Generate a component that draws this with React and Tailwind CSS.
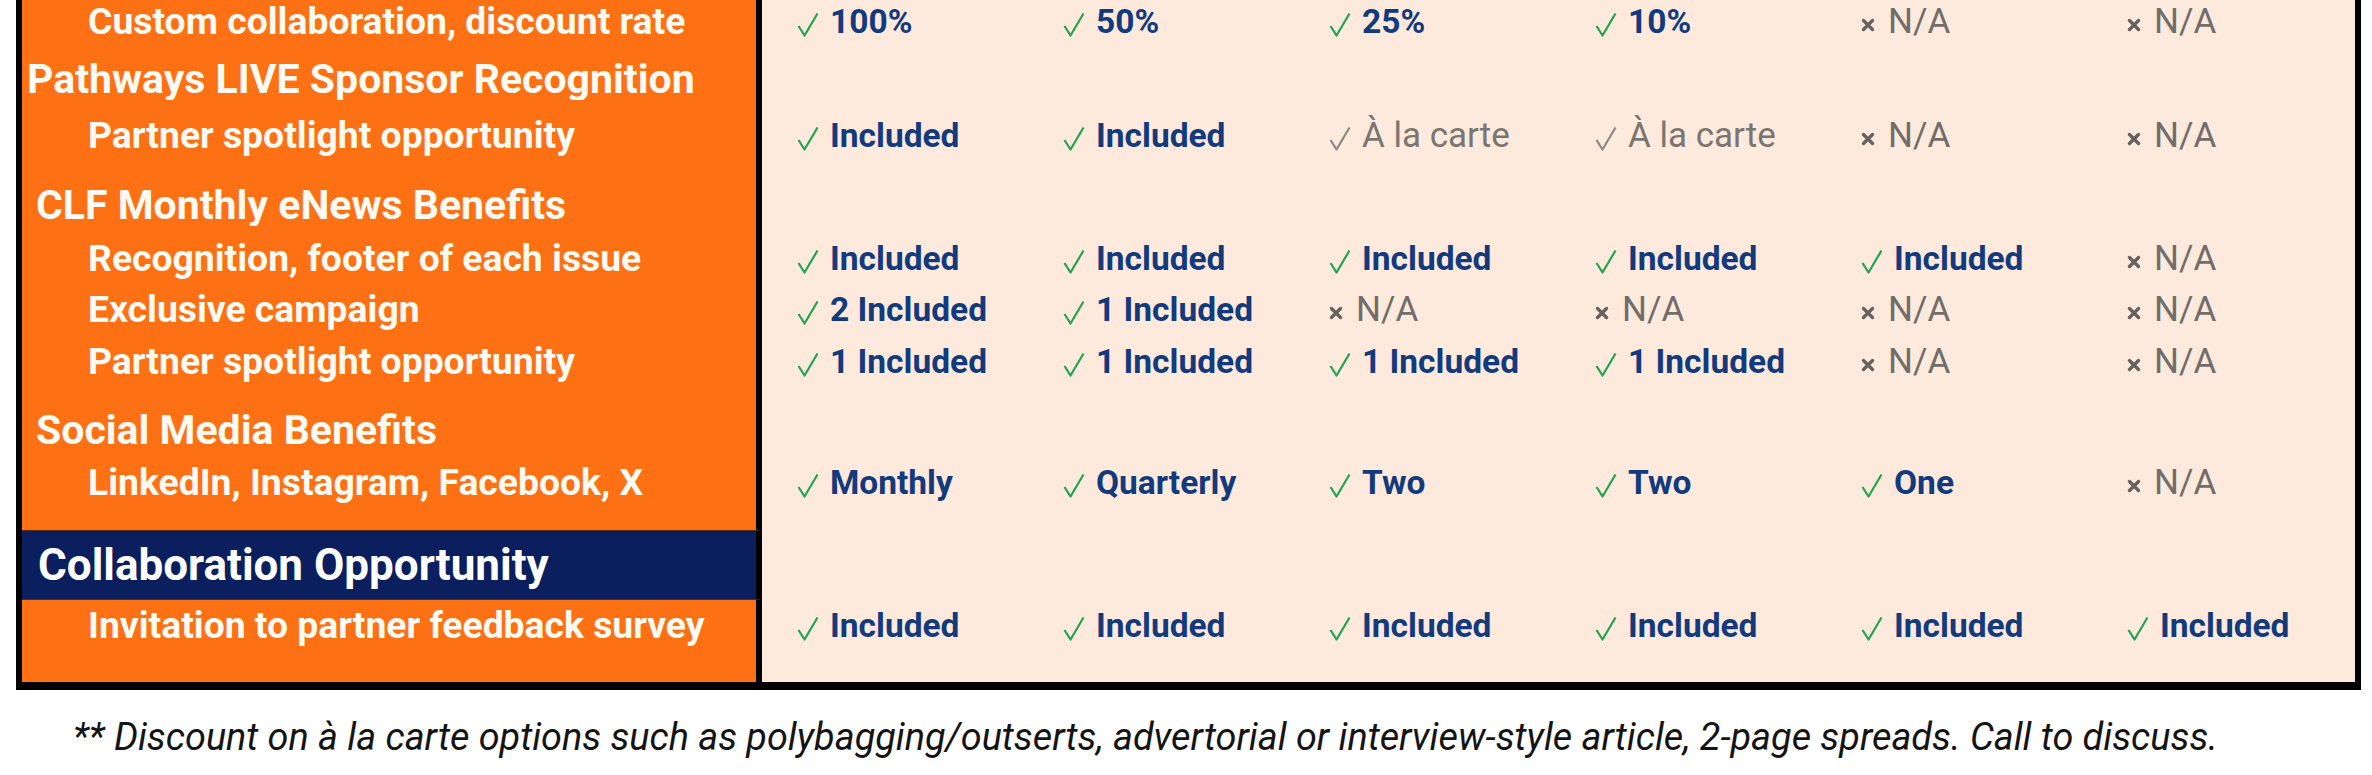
import React from 'react'

const rows = [
    { kind: 'sub', label: 'Custom collaboration, discount rate', pad: 'pt-0', line: 'h-[44px]',
      cells: [['ok', '100%'], ['ok', '50%'], ['ok', '25%'], ['ok', '10%'], ['na'], ['na']] },
    { kind: 'head', label: 'Pathways LIVE Sponsor Recognition', pad: 'pt-[16px]', indent: 'pl-[5px]' },
    { kind: 'sub', label: 'Partner spotlight opportunity', pad: 'pt-[16px]',
      cells: [['ok', 'Included'], ['ok', 'Included'], ['alc', 'À la carte'], ['alc', 'À la carte'], ['na'], ['na']] },
    { kind: 'head', label: 'CLF Monthly eNews Benefits', pad: 'pt-[30px]', indent: 'pl-[14px]' },
    { kind: 'sub', label: 'Recognition, footer of each issue', pad: 'pt-[13px]',
      cells: [['ok', 'Included'], ['ok', 'Included'], ['ok', 'Included'], ['ok', 'Included'], ['ok', 'Included'], ['na']] },
    { kind: 'sub', label: 'Exclusive campaign', pad: 'pt-[11px]',
      cells: [['ok', '2 Included'], ['ok', '1 Included'], ['na'], ['na'], ['na'], ['na']] },
    { kind: 'sub', label: 'Partner spotlight opportunity', pad: 'pt-[12px]',
      cells: [['ok', '1 Included'], ['ok', '1 Included'], ['ok', '1 Included'], ['ok', '1 Included'], ['na'], ['na']] },
    { kind: 'head', label: 'Social Media Benefits', pad: 'pt-[29px]', indent: 'pl-[14px]' },
    { kind: 'sub', label: 'LinkedIn, Instagram, Facebook, X', pad: 'pt-[12px] pb-[27px]',
      cells: [['ok', 'Monthly'], ['ok', 'Quarterly'], ['ok', 'Two'], ['ok', 'Two'], ['ok', 'One'], ['na']] },
    { kind: 'navy', label: 'Collaboration Opportunity' },
    { kind: 'sub', label: 'Invitation to partner feedback survey', pad: 'pt-[6px] pb-[36px]',
      cells: [['ok', 'Included'], ['ok', 'Included'], ['ok', 'Included'], ['ok', 'Included'], ['ok', 'Included'], ['ok', 'Included']] },
]

function Check({ gray }) {
    return (
        <svg width="22" height="25" viewBox="0 0 22 25" className="shrink-0 mt-[5px]">
            <polyline points="1.5,14 7.5,23.5 20.5,1.5" fill="none"
                stroke={gray ? '#8c8885' : '#1fa44f'} strokeWidth="2.2" strokeLinejoin="round" />
        </svg>
    )
}

function Cross() {
    return (
        <svg width="14" height="14" viewBox="0 0 14 14" className="shrink-0 mt-[6px]">
            <path d="M2.5 2.5 L11.5 11.5 M11.5 2.5 L2.5 11.5" stroke="#66625f" strokeWidth="3.4" strokeLinecap="round" />
        </svg>
    )
}

function Cell({ cell, line }) {
    const [type, text] = cell

    if (type === 'na') {
        return (
            <div className={`flex items-center gap-[13px] ${line}`}>
                <Cross />
                <span className="text-[35px] text-[#716d6a]">N/A</span>
            </div>
        )
    }

    if (type === 'alc') {
        return (
            <div className={`flex items-center gap-[11px] ${line}`}>
                <Check gray />
                <span className="text-[35px] text-[#7a7571]">{text}</span>
            </div>
        )
    }

    return (
        <div className={`flex items-center gap-[11px] ${line}`}>
            <Check />
            <span className="text-[33.5px] font-bold text-[#123a7c]">{text}</span>
        </div>
    )
}

function Row({ row }) {
    const line = row.line || 'h-[40px]'

    if (row.kind === 'navy') {
        return (
            <div className="flex">
                <div className="w-[740px] shrink-0 border-r-[6px] border-black bg-[#0b1f5f] h-[70px] flex items-center pl-[16px] border-y border-y-[#5a2a10]">
                    <span className="text-[44px] font-bold text-white leading-none whitespace-nowrap">{row.label}</span>
                </div>
                <div className="flex-1 min-w-0 bg-[#fdeadc]"></div>
            </div>
        )
    }

    return (
        <div className="flex">
            <div className={`w-[740px] shrink-0 border-r-[6px] border-black bg-[#fe7014] ${row.pad}`}>
                {row.kind === 'head' ? (
                    <div className={`${line} flex items-center text-[41px] font-bold text-[#fffaf2] whitespace-nowrap ${row.indent}`}>
                        {row.label}
                    </div>
                ) : (
                    <div className={`${line} flex items-center pl-[66px] text-[37.3px] font-bold text-[#fffaf2] whitespace-nowrap`}>
                        {row.label}
                    </div>
                )}
            </div>
            <div className={`flex-1 min-w-0 bg-[#fdeadc] ${row.pad}`}>
                {row.cells && (
                    <div className="grid grid-cols-[repeat(5,266px)_1fr] pl-[35px] whitespace-nowrap">
                        {row.cells.map((cell, i) => <Cell key={i} cell={cell} line={line} />)}
                    </div>
                )}
            </div>
        </div>
    )
}

export default function App() {
    return (
        <div className="w-[2372px] h-[775px] bg-white overflow-hidden font-[family-name:Roboto,sans-serif]">
            <div className="ml-[16px] w-[2345px] border-x-[6px] border-b-[8px] border-black">
                {rows.map((row, i) => <Row key={i} row={row} />)}
            </div>
            <p className="mt-[27px] pl-[73px] h-[40px] leading-[40px] text-[37.8px] italic text-[#141414] whitespace-nowrap">
                ** Discount on à la carte options such as polybagging/outserts, advertorial or interview-style article, 2-page spreads. Call to discuss.
            </p>
        </div>
    )
}
